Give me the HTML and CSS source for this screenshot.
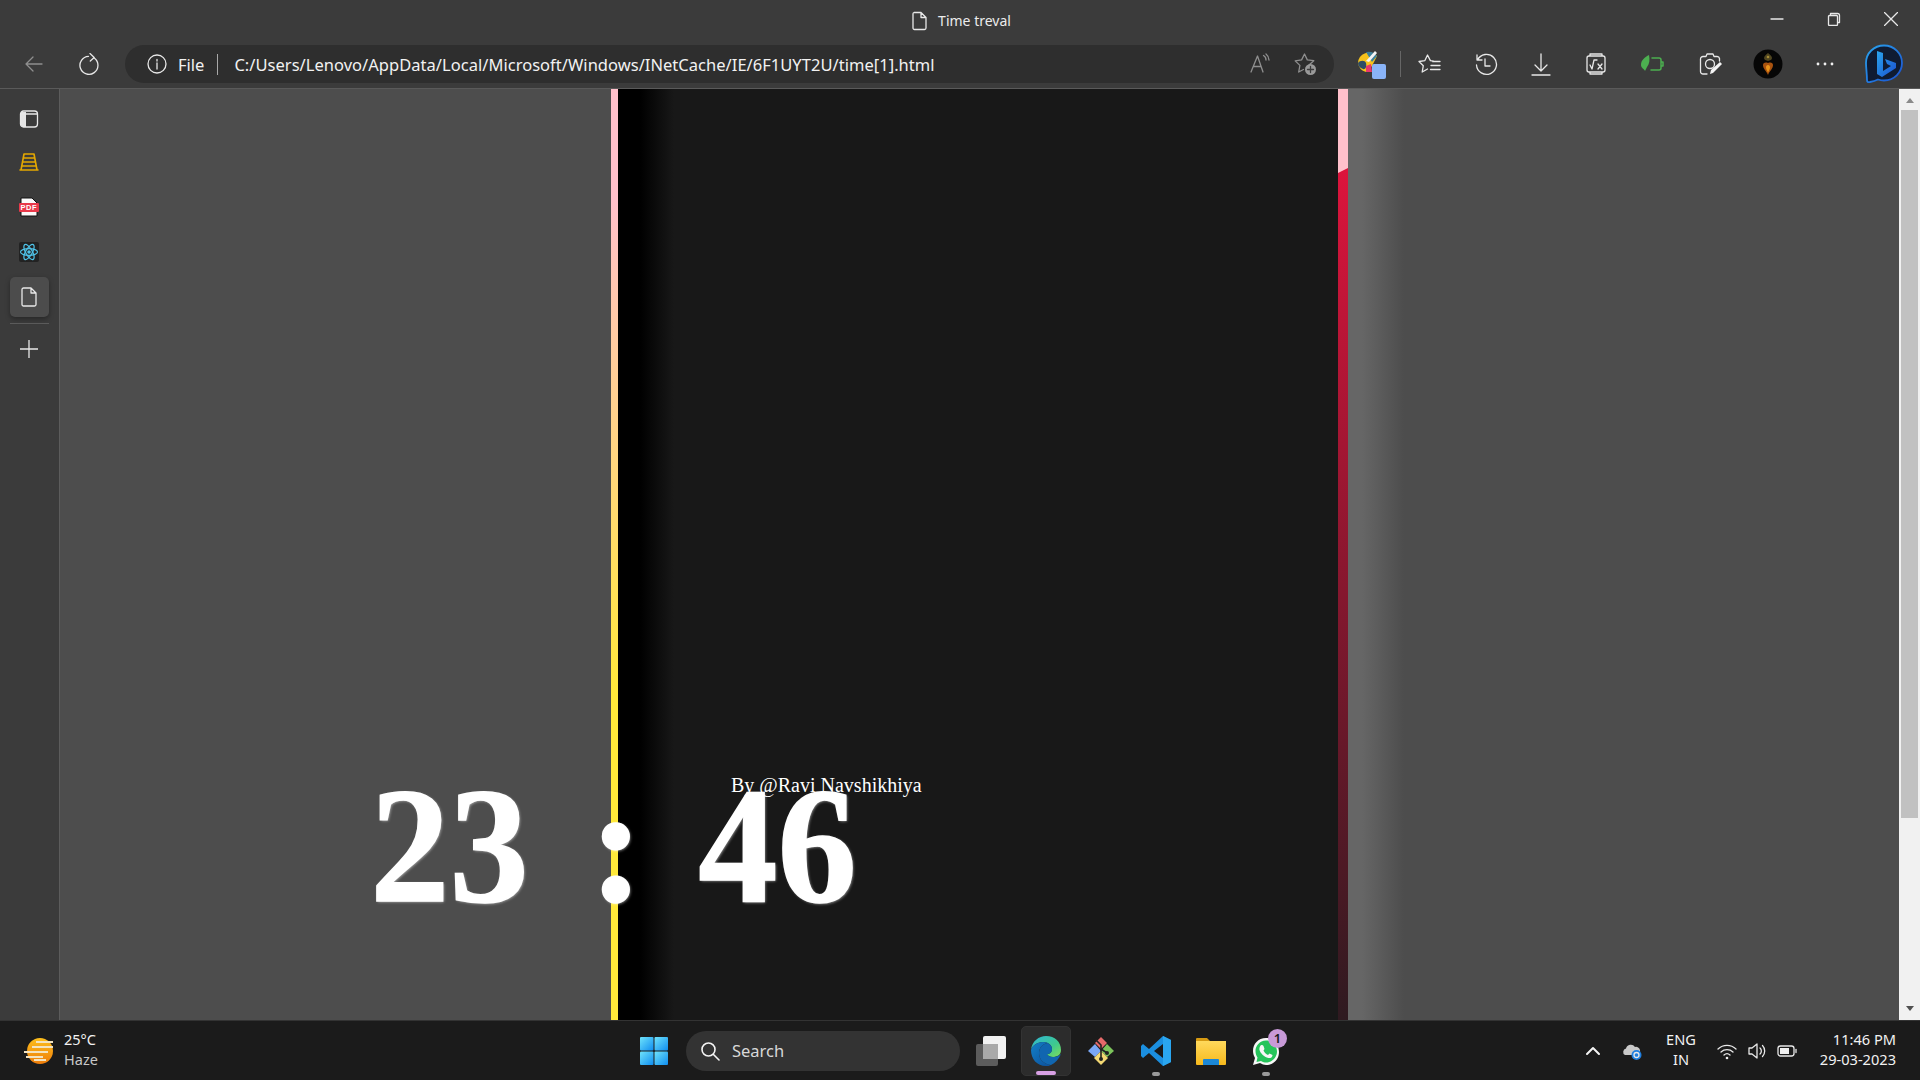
FILE: index.html
```html
<!DOCTYPE html>
<html lang="en">
<head>
<meta charset="utf-8">
<title>Time treval</title>
<link rel="stylesheet" href="styles.css">
</head>
<body>
<svg class="defs" width="0" height="0" aria-hidden="true">
  <defs>
    <linearGradient id="edgeTop" x1="0" y1="0" x2="1" y2="1"><stop offset="0" stop-color="#2fb5d8"/><stop offset=".6" stop-color="#3ec98e"/><stop offset="1" stop-color="#7fdc5a"/></linearGradient>
    <linearGradient id="edgeLow" x1="0" y1="0" x2="1" y2="1"><stop offset="0" stop-color="#1380c8"/><stop offset="1" stop-color="#0c4f9a"/></linearGradient>
    <linearGradient id="sun" x1="0" y1="0" x2="0" y2="1"><stop offset="0" stop-color="#fdbf1c"/><stop offset="1" stop-color="#ee7d0b"/></linearGradient>
    <linearGradient id="win" x1="0" y1="0" x2="1" y2="1"><stop offset="0" stop-color="#6fe3fb"/><stop offset="1" stop-color="#0f8df0"/></linearGradient>
    <linearGradient id="bing" x1="0" y1="0" x2="1" y2="1"><stop offset="0" stop-color="#2aa5ee"/><stop offset="1" stop-color="#1a4fd0"/></linearGradient>
    <linearGradient id="folder" x1="0" y1="0" x2="0" y2="1"><stop offset="0" stop-color="#ffd95c"/><stop offset="1" stop-color="#f7b91c"/></linearGradient>
  </defs>
</svg>

<header class="chrome">
  <div class="title-row">
    <div></div>
    <div class="title">
      <svg class="ico20" viewBox="0 0 20 20"><path class="ln" d="M5 1.500h7L17 6.500v10.500a1.500 1.500 0 0 1-1.500 1.500h-10A1.500 1.500 0 0 1 4 17V3a1.500 1.500 0 0 1 1-1.500zM12 1.500v5h5"/></svg>
      <span>Time treval</span>
    </div>
    <div class="winctl">
      <span class="winbtn"><svg class="ico14" viewBox="0 0 14 14"><path class="ln" d="M1 7h12"/></svg></span>
      <span class="winbtn"><svg class="ico14" viewBox="0 0 14 14"><path class="ln" d="M3.500 2.500V1.500h7a2 2 0 0 1 2 2v7h-1M1.500 4.500a1 1 0 0 1 1-1h7a1 1 0 0 1 1 1v8a1 1 0 0 1-1 1h-7a1 1 0 0 1-1-1z"/></svg></span>
      <span class="winbtn"><svg class="ico14" viewBox="0 0 14 14"><path class="ln" d="M.5.500l13 13M13.500.500l-13 13"/></svg></span>
    </div>
  </div>
  <div class="toolbar">
    <span class="slot nav"><svg class="ico20" viewBox="0 0 20 20"><path class="ln dim" d="M18 10H2M9 3l-7 7 7 7"/></svg></span>
    <span class="slot nav"><svg class="ico22" viewBox="0 0 22 22"><path class="ln" d="M15.500 5.200A9 9 0 1 1 9.500 3.300M11 .5L15.200 4.500 11.300 8"/></svg></span>
    <div class="address">
      <svg class="ico20" viewBox="0 0 20 20"><circle class="ln" cx="10" cy="10" r="9"/><path class="ln" d="M10 9v6M10 5.500v1.500"/></svg>
      <span class="file">File</span>
      <span class="addr-sep"></span>
      <span class="url">C:/Users/Lenovo/AppData/Local/Microsoft/Windows/INetCache/IE/6F1UYT2U/time[1].html</span>
      <span class="addr-end">
        <svg class="ico22" viewBox="0 0 22 22"><path class="ln dim" d="M2 19L8.500 3 14 19M4.500 13.500h7.500M14.500 2.500a5 5 0 0 1 2.500 4.500M17 1a8 8 0 0 1 3 6"/></svg>
        <svg class="ico24" viewBox="0 0 24 24"><path class="ln dim" d="M16 13L20.800 8.700 14.300 7.900 11.500 2 8.600 7.900 2.200 8.900 6.900 13.400 5.700 20 10.500 17.500"/><circle class="fill-dim" cx="17.500" cy="17.500" r="5.500"/><path class="ln dark" d="M17.500 14.500v6M14.500 17.500h6"/></svg>
      </span>
    </div>
    <span class="slot w56">
      <svg class="ico32" viewBox="0 0 32 32">
        <path d="M2 15a11 11 0 0 1 19-7l-5 10-6 6a11 11 0 0 1-8-9z" fill="#f6c21c"/>
        <path d="M10 4a11 11 0 0 1 11 4l-5 6z" fill="#3b7f9a"/>
        <path d="M2 15c2-3 7-3 8 0 1 4-1 7-3 6-3-1-5-3-5-6z" fill="#2e4d66"/>
        <path d="M19 3l2 2-8 9-3-1z" fill="#f4f4f4"/>
        <path d="M10 18l5-2 1 8-6 0z" fill="#e8386a"/>
        <rect x="16" y="16" width="14" height="15" rx="2" fill="#8ab4f8"/>
      </svg>
    </span>
    <span class="tool-sep"></span>
    <span class="slot w56"><svg class="ico24" viewBox="0 0 24 24"><path class="ln" d="M15.500 9.200L12.400 8.600 9.500 3 6.900 8.600 1 9.500 5.300 13.700 4.200 20 9.500 17M14.500 9.500h7.500M13 13.500h9M12.500 17.500h9.500"/></svg></span>
    <span class="slot w55"><svg class="ico24" viewBox="0 0 24 24"><path class="ln" d="M3 3v5h5M3.500 8a10 10 0 1 1-1 5M11 7v7h5"/></svg></span>
    <span class="slot w55"><svg class="ico24" viewBox="0 0 24 24"><path class="ln" d="M12 2v17M6 13l6 6 6-6M3 23h18"/></svg></span>
    <span class="slot w55"><svg class="ico24" viewBox="0 0 24 24"><path class="ln" d="M6 4V2h12v2M6 20v2h12v-2M3 6a2 2 0 0 1 2-2h14a2 2 0 0 1 2 2v12a2 2 0 0 1-2 2H5a2 2 0 0 1-2-2zM6 13l2 4 2-9h3M14 12l4 5M18 12l-4 5"/></svg></span>
    <span class="slot w58"><svg class="ico24" viewBox="0 0 24 24"><path class="ln green" d="M12 6h7a2 2 0 0 1 2 2v8a2 2 0 0 1-2 2h-8M21 10h2v4h-2"/><path d="M1 13c0-5 4-8 8-10 1 5 .5 9-2 12l-2 4c-.5-2-4-3-4-6z" fill="#4caf50"/></svg></span>
    <span class="slot w58"><svg class="ico24" viewBox="0 0 24 24"><path class="ln" d="M9 22H5a2.500 2.500 0 0 1-2.500-2.500V7A2.500 2.500 0 0 1 5 4.500h3l1-2.500h6l1 2.500h3a2.500 2.500 0 0 1 2.500 2V9"/><circle class="ln" cx="12" cy="12" r="4.500"/><path d="M12 22l1-4L22 10l2 2-9 9z" fill="#f4f4f4"/></svg></span>
    <span class="slot w58">
      <svg class="ico30" viewBox="0 0 30 30">
        <circle cx="15" cy="15" r="14.500" fill="#060606"/>
        <path d="M15 14c3-1 5 0 5 2 0 4-3 5-5 10-2-5-5-6-5-10 0-2 2-3 5-2z" fill="#a8520f"/>
        <path d="M15 16c1.500 0 2 1 2 2.500 0 1.500-1 2.500-2 5-1-2.500-2-3.500-2-5 0-1.500.5-2.500 2-2.500z" fill="#e8941b"/>
        <path d="M15 4c2 2 4 3 4 5s-2 2-4 3c-2-1-4-1-4-3s2-3 4-5z" fill="#4f4520"/>
        <circle cx="15" cy="8" r="1.300" fill="#a58a36"/>
      </svg>
    </span>
    <span class="slot w56"><svg class="ico20" viewBox="0 0 20 20"><circle class="dot" cx="3" cy="10" r="1.400"/><circle class="dot" cx="10" cy="10" r="1.400"/><circle class="dot" cx="17" cy="10" r="1.400"/></svg></span>
    <span class="slot w62">
      <svg class="ico40" viewBox="0 0 40 40">
        <path d="M20 1.500C10 1.500 2 9 2 19c0 5 1 11 1 17 0 2 1 2.500 3 2 3-.5 6-1.500 8-2.500 2 .7 4 1 6 1 10 0 18-8 18-17.500S30 1.500 20 1.500z" fill="#0f1b33" stroke="url(#bing)" stroke-width="1.800"/>
        <path d="M13 7l6 2v18l8-5-4-2-2-5 11 4v5l-14 9-5-3z" fill="url(#bing)"/>
      </svg>
    </span>
  </div>
</header>

<main class="main">
  <nav class="sidebar">
    <span class="side-item first"><svg class="ico20" viewBox="0 0 20 20"><path d="M2 3h5v15H4a2 2 0 0 1-2-2z" fill="#e4e4e4"/><rect class="ln" x="1.500" y="2" width="17" height="16" rx="3"/><path class="ln" d="M2 5h16"/></svg></span>
    <span class="side-item"><svg class="ico20" viewBox="0 0 20 20"><path class="ln amber" d="M5 2L2 18M15 2l3 16M5 2h10M4.500 6h11M4 10h12M3.500 14h13M1 18h18"/></svg></span>
    <span class="side-item"><svg class="ico20 pdf-ico" viewBox="0 0 20 20"><path d="M2 1h11l5 5v13H2z" fill="#fafafa" stroke="#111"/><rect x="0" y="6" width="20" height="9" rx="1" fill="#e8394a"/></svg><b class="pdf">PDF</b></span>
    <span class="side-item"><svg class="ico20" viewBox="0 0 20 20"><rect width="20" height="20" rx="2" fill="#222"/><g class="react"><ellipse cx="10" cy="10" rx="8.500" ry="3.300"/><ellipse cx="10" cy="10" rx="8.500" ry="3.300" transform="rotate(60 10 10)"/><ellipse cx="10" cy="10" rx="8.500" ry="3.300" transform="rotate(120 10 10)"/></g><circle cx="10" cy="10" r="1.800" fill="#4fc3e8"/></svg></span>
    <span class="side-item active"><svg class="ico20" viewBox="0 0 20 20"><path class="ln" d="M4.500 1h7.500l5 5v11.500a1.500 1.500 0 0 1-1.500 1.500h-11A1.500 1.500 0 0 1 3 17.500V2.500A1.500 1.500 0 0 1 4.500 1zM12 1v5h5"/></svg></span>
    <span class="side-line"></span>
    <span class="side-item plus"><svg class="ico18" viewBox="0 0 18 18"><path class="ln" d="M9 0v18M0 9h18"/></svg></span>
  </nav>

  <section class="page">
    <div class="lead"></div>
    <div class="bar-left"></div>
    <div class="panel"></div>
    <div class="bar-right"><div class="bar-red"></div></div>
    <div class="glow"></div>
    <div class="clock">
      <span class="num">23</span><span class="colon">:</span><span class="num">46</span>
    </div>
    <p class="byline">By @Ravi Navshikhiya</p>
  </section>

  <aside class="scrollbar">
    <span class="arrow up"></span>
    <span class="thumb"></span>
    <span class="arrow down"></span>
  </aside>
</main>

<footer class="taskbar">
  <div class="weather">
    <svg class="ico36" viewBox="0 0 36 36">
      <circle cx="18" cy="18" r="13" fill="url(#sun)"/>
      <path class="haze" d="M14 9h17M10 14h21M2 19h24M4 24h17M12 27h12"/>
    </svg>
    <div class="weather-text"><span>25°C</span><span class="sub">Haze</span></div>
  </div>
  <div class="center">
    <span class="tb-slot start">
      <svg class="ico30" viewBox="0 0 30 30"><g fill="url(#win)"><rect x="1" y="1" width="13.500" height="13.500" rx="1"/><rect x="15.500" y="1" width="13.500" height="13.500" rx="1"/><rect x="1" y="15.500" width="13.500" height="13.500" rx="1"/><rect x="15.500" y="15.500" width="13.500" height="13.500" rx="1"/></g></svg>
    </span>
    <div class="search">
      <svg class="ico20" viewBox="0 0 20 20"><circle class="ln bright" cx="8.500" cy="8.500" r="6.500"/><path class="ln bright" d="M13.500 13.500L19 19"/></svg>
      <span>Search</span>
    </div>
    <span class="tb-slot view">
      <svg class="ico32" viewBox="0 0 32 32"><rect x="1" y="9" width="22" height="22" rx="2" fill="#5c5c5c"/><rect x="8" y="1" width="23" height="23" rx="2" fill="#f2f2f2"/><rect x="8" y="9" width="15" height="15" fill="#a9a9a9"/></svg>
    </span>
    <span class="tb-app on">
      <svg class="ico32" viewBox="0 0 32 32">
        <path d="M1 15C2 6 9 1 16 1c9 0 15 6 15 14 0 5-4 7-8 7-3 0-5-1-6-3 3 0 5-2 5-5 0-4-4-7-9-7-6 0-11 4-12 8z" fill="url(#edgeTop)"/>
        <path d="M1 15c1-4 6-8 12-8 3 0 5 1 5 1-6 1-9 5-9 10 0 6 4 11 12 12-2 1-3 1-5 1C7 31 1 24 1 15z" fill="url(#edgeLow)"/>
        <path d="M9 18c0-5 3-9 9-10 3 2 4 4 4 6 0 3-2 5-5 5 1 2 3 3 6 3 3 0 6-1 8-3-2 5-6 9-10 11-8-1-12-6-12-12z" fill="#1166b0"/>
      </svg>
      <i class="pill-on"></i>
    </span>
    <span class="tb-app">
      <svg class="ico32" viewBox="0 0 32 32">
        <path d="M16 2l6 6-6 6-6-6z" fill="#e66a6a"/><path d="M3 16l7-7 6 7-6 6z" fill="#7aa7f5"/><path d="M29 16l-7-7-6 7 6 6z" fill="#7cc45c"/><path d="M16 30l-7-7 7-7 7 7z" fill="#f3d873"/>
        <path class="ln ink" d="M11 5l5 5v14M16 14l6 4"/><circle cx="16" cy="24" r="2" fill="#222"/><circle cx="22" cy="18" r="2" fill="#222"/>
      </svg>
    </span>
    <span class="tb-app">
      <svg class="ico32" viewBox="0 0 32 32">
        <path d="M23 1l8 4v22l-8 4-14-13 -6 5-2-2v-10l2-2 6 5z" fill="#1b8fe0"/>
        <path d="M23 9l-9 7 9 7z" fill="#1a1a1a"/>
        <path d="M23 1l8 4v22l-8 4z" fill="#2aa6f0"/>
      </svg>
      <i class="pill-off"></i>
    </span>
    <span class="tb-app">
      <svg class="ico32" viewBox="0 0 32 32">
        <path d="M1 4a1 1 0 0 1 1-1h10l3 3h-14z" fill="#d69a12"/>
        <path d="M1 6h30v23a1 1 0 0 1-1 1H2a1 1 0 0 1-1-1z" fill="url(#folder)"/>
        <path d="M9 24h14a1 1 0 0 1 1 1v5H8v-5a1 1 0 0 1 1-1z" fill="#1b87d6"/>
      </svg>
    </span>
    <span class="tb-app">
      <svg class="ico32" viewBox="0 0 32 32">
        <path d="M16 3C8 3 3 9 3 16c0 3 1 5 2 7L3 30l7-2c2 1 4 2 6 2 8 0 13-6 13-13S24 3 16 3z" fill="#f7f7f7"/>
        <path d="M16 5.500C9.500 5.500 5.500 11 5.500 16c0 3 1 5 2 6.500L6.500 27l4.500-1c2 1 3.500 1.500 5 1.500 6 0 11-5 11-11S22 5.500 16 5.500z" fill="#25c45a"/>
        <path d="M11.500 10c1 0 1.500 0 2 1l1 3-1 1.500c1 2 2.500 3.500 4.500 4.500l1.500-1.500 3 1.500c0 2-1.500 3.500-4 3-5-1-8-5-9-8-.5-2.500 1-5 2-5z" fill="#f7f7f7"/>
      </svg>
      <b class="badge">1</b>
      <i class="pill-off"></i>
    </span>
  </div>
  <div class="tray">
    <span class="tr chev"><svg class="ico16" viewBox="0 0 16 16"><path class="ln thick" d="M2 11l6-6 6 6"/></svg></span>
    <span class="tr cloud">
      <svg class="ico20" viewBox="0 0 20 20"><path d="M3 14a3.500 3.500 0 0 1 1-6.500A5 5 0 0 1 13 6a4 4 0 0 1 2 8z" fill="#c9c9c9"/><circle cx="14.500" cy="14" r="5" fill="#1f7fe0"/><circle class="ln" cx="14.500" cy="14" r="2.500"/></svg>
    </span>
    <span class="lang"><span>ENG</span><span>IN</span></span>
    <span class="tr wifi"><svg class="ico20" viewBox="0 0 20 20"><path class="ln" d="M1 8a13 13 0 0 1 18 0M4 11a9 9 0 0 1 12 0M7 14a4.500 4.500 0 0 1 6 0"/><circle class="dot" cx="10" cy="17" r="1.300"/></svg></span>
    <span class="tr vol"><svg class="ico20" viewBox="0 0 20 20"><path class="ln" d="M1 7h3l5-4v14l-5-4H1zM12 7a4 4 0 0 1 0 6M14.500 4.500a8 8 0 0 1 0 11"/></svg></span>
    <span class="tr batt"><svg class="ico20" viewBox="0 0 20 20"><rect class="ln" x="1" y="5" width="16" height="10" rx="2.500"/><rect class="dot" x="3" y="7" width="9" height="6"/><path class="ln" d="M19 8.500v3"/></svg></span>
    <span class="clocktxt"><span>11:46 PM</span><span>29-03-2023</span></span>
  </div>
</footer>
</body>
</html>
```

FILE: styles.css
```css
* { box-sizing: border-box; }

html, body { height: 100%; }

body {
  margin: 0;
  width: 1920px;
  height: 1080px;
  overflow: hidden;
  display: flex;
  flex-direction: column;
  background: #3b3b3b;
  color: #f2f2f2;
  font-family: "Noto Sans", "Open Sans", sans-serif;
}

.defs { position: absolute; }

svg { display: block; flex: none; }
.ico14 { width: 14px; height: 14px; }
.ico16 { width: 16px; height: 16px; }
.ico18 { width: 18px; height: 18px; }
.ico20 { width: 20px; height: 20px; }
.ico22 { width: 22px; height: 22px; }
.ico24 { width: 24px; height: 24px; }
.ico30 { width: 30px; height: 30px; }
.ico32 { width: 32px; height: 32px; }
.ico36 { width: 36px; height: 36px; }
.ico40 { width: 40px; height: 40px; }

.ln { fill: none; stroke: #e8e8e8; stroke-width: 1.3; stroke-linejoin: round; stroke-linecap: round; }
.ln.dim { stroke: #8f8f8f; }
.ln.dark { stroke: #3b3b3b; }
.ln.green { stroke: #4caf50; stroke-width: 1.5; }
.ln.amber { stroke: #e5a800; stroke-width: 1.6; }
.ln.bright { stroke: #f4f4f4; stroke-width: 1.6; }
.ln.ink { stroke: #222; stroke-width: 1.6; }
.ln.thick { stroke: #f4f4f4; stroke-width: 2; }
.fill-dim { fill: #999; }
.dot { fill: #f0f0f0; }
.react { fill: none; stroke: #4fc3e8; stroke-width: 1.2; }
.haze { fill: none; stroke: #f3e3c0; stroke-width: 2; }

/* browser chrome */
.chrome { height: 89px; flex: none; border-bottom: 1px solid #5a5a5a; }

.title-row {
  height: 40px;
  display: grid;
  grid-template-columns: 1fr auto 1fr;
  align-items: center;
}

.title { display: flex; align-items: center; gap: 9px; font-size: 14px; color: #ececec; padding-top: 1px; }

.winctl { display: flex; justify-self: end; padding-right: 1px; margin-top: -2px; }
.winbtn { width: 57px; display: flex; justify-content: center; }

.toolbar { height: 48px; display: flex; align-items: center; padding-top: 5px; padding-bottom: 5px; padding-left: 6px; }

.slot { display: flex; justify-content: center; align-items: center; flex: none; }
.nav { width: 56px; }
.w55 { width: 55px; }
.w56 { width: 56px; }
.w58 { width: 58px; }
.w62 { width: 62px; }

.address {
  width: 1209px;
  height: 38px;
  margin-left: 7px;
  margin-right: 10px;
  flex: none;
  display: flex;
  align-items: center;
  padding-left: 22px;
  padding-right: 17px;
  border-radius: 19px;
  background: #2e2e2e;
}

.file { margin-left: 11px; font-size: 16.5px; }
.addr-sep { width: 1px; height: 21px; margin-left: 13px; margin-right: 16px; background: #a8a8a8; }
.url { font-size: 16.5px; letter-spacing: .03px; white-space: nowrap; color: #f2f2f2; }
.addr-end { margin-left: auto; display: flex; align-items: center; gap: 22px; }

.tool-sep { width: 1px; height: 26px; margin-right: 1px; background: #666; flex: none; }

/* main area */
.main { flex: 1; display: flex; min-height: 0; }

.sidebar {
  width: 60px;
  flex: none;
  display: flex;
  flex-direction: column;
  align-items: center;
  padding-right: 1px;
  border-right: 1px solid #5c5c5c;
  background: #3b3b3b;
}

.side-item {
  position: relative;
  width: 39px;
  height: 40px;
  margin-top: 5px;
  flex: none;
  display: flex;
  align-items: center;
  justify-content: center;
}
.side-item.first { height: 36px; margin-top: 12px; }
.side-item.active {
  border-radius: 5px;
  background: #4c4c4c;
  box-shadow: 0 2px 5px rgba(0, 0, 0, .35);
}
.side-item.plus { margin-top: 5px; }
.side-line { width: 39px; height: 1px; margin-top: 6px; background: #5c5c5c; flex: none; }

.pdf {
  position: absolute;
  left: 11px;
  top: 16px;
  font: bold 7.5px/9px "Liberation Sans", sans-serif;
  letter-spacing: .6px;
  color: #fff;
}

.page {
  position: relative;
  flex: 1;
  min-width: 0;
  display: grid;
  grid-template-columns: 551px 7px 720px 10px 1fr;
  background: #4d4d4d;
}

.bar-left { background: linear-gradient(180deg, #ffc0cb 12%, #ffe93a 65%); }
.panel { background: linear-gradient(90deg, #000 0, #000 22px, #181818 56px); }

.bar-right { display: flex; flex-direction: column; background: #ffc0cb; padding-top: 79px; }
.bar-red {
  flex: 1;
  clip-path: polygon(0 5px, 100% 0, 100% 100%, 0 100%);
  background: linear-gradient(180deg, #dc143c 0, #2e1a20 100%);
}

.glow { background: linear-gradient(90deg, #666 0, #666 14px, #4d4d4d 56px); }

.clock {
  position: absolute;
  left: 307px;
  top: 674px;
  display: flex;
  font: bold 165px/1 "Liberation Serif", "Times New Roman", serif;
  color: #fff;
  -webkit-text-stroke: 1.5px #fff;
  text-shadow: 1px 1px 3px rgba(255, 255, 255, .6);
}
.num { width: 165px; transform: scaleX(.96); }
.colon { margin-left: 57px; margin-right: 51px; }

.byline {
  position: absolute;
  left: 671px;
  top: 685px;
  margin: 0;
  font: 20px/23px "Liberation Serif", "Times New Roman", serif;
  color: #fff;
}

/* scrollbar */
.scrollbar {
  width: 21px;
  flex: none;
  display: flex;
  flex-direction: column;
  align-items: center;
  background: #f1f1f1;
}
.thumb { width: 17px; height: 708px; margin-top: 7px; background: #c1c1c1; }
.arrow { width: 0; height: 0; border-left: 4.5px solid transparent; border-right: 4.5px solid transparent; }
.arrow.up { margin-top: 9px; border-bottom: 5px solid #8a8a8a; }
.arrow.down { margin-top: auto; margin-bottom: 9px; border-top: 5px solid #505050; }

/* taskbar */
.taskbar {
  height: 60px;
  flex: none;
  position: relative;
  display: flex;
  align-items: center;
  border-top: 1px solid #333;
  background: #1b1b1b;
  font-size: 14.6px;
  color: #f2f2f2;
}

.weather { width: 622px; flex: none; display: flex; align-items: center; gap: 6px; padding-left: 22px; }
.weather-text { display: flex; flex-direction: column; font-size: 14.5px; line-height: 20px; margin-top: -4px; }
.sub { color: #c8c8c8; }

.center { display: flex; align-items: center; flex: none; }
.tb-slot { display: flex; align-items: center; justify-content: center; flex: none; }
.start { width: 64px; }
.view { width: 61px; margin-right: 0; }

.search {
  width: 274px;
  height: 40px;
  flex: none;
  display: flex;
  align-items: center;
  gap: 12px;
  padding-left: 14px;
  border-radius: 20px;
  background: #333;
  font-size: 16.5px;
  color: #d8d8d8;
}

.tb-app {
  position: relative;
  width: 50px;
  height: 50px;
  margin-right: 5px;
  flex: none;
  display: flex;
  align-items: center;
  justify-content: center;
  border-radius: 5px;
}
.tb-app.on { background: #2c2c2c; border: 1px solid #333; }

.pill-on { position: absolute; left: 14px; bottom: 0; width: 20px; height: 4px; border-radius: 2px; background: #d8a0e4; }
.pill-off { position: absolute; left: 21px; bottom: 0; width: 8px; height: 4px; border-radius: 2px; background: #9a9a9a; }

.badge {
  position: absolute;
  left: 27px;
  top: 3px;
  width: 19px;
  height: 19px;
  border-radius: 50%;
  background: #c89ad8;
  color: #1b1b1b;
  font: 600 13px/19px "Noto Sans", sans-serif;
  text-align: center;
}

.tray { margin-left: auto; display: flex; align-items: center; padding-right: 24px; flex: none; }
.tr { display: flex; justify-content: center; flex: none; }
.chev { width: 30px; margin-right: 9px; }
.cloud { width: 30px; margin-right: 14px; }
.lang { width: 40px; margin-right: 10px; margin-top: -2px; display: flex; flex-direction: column; align-items: center; line-height: 19.5px; }
.wifi { width: 32px; }
.vol { width: 30px; }
.batt { width: 28px; margin-right: 17px; }
.clocktxt { width: 78px; margin-top: -2px; display: flex; flex-direction: column; align-items: flex-end; line-height: 19.5px; white-space: nowrap; }
```
